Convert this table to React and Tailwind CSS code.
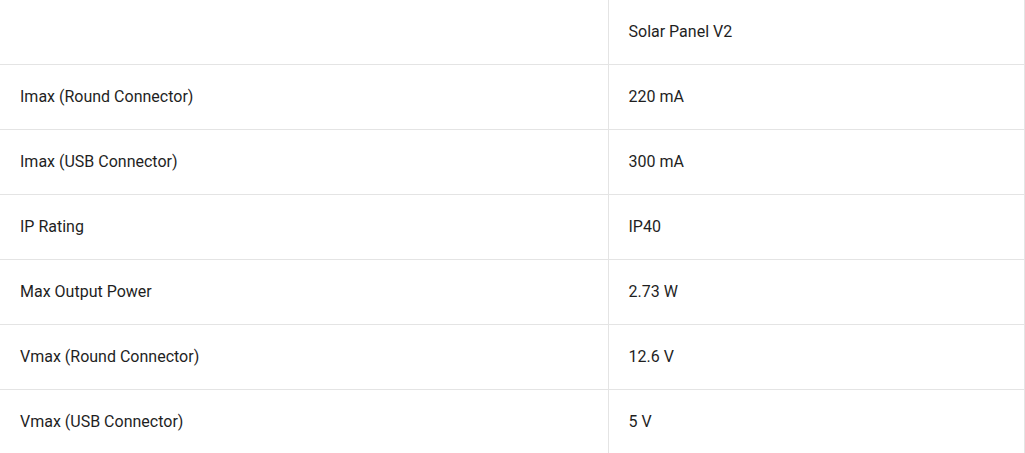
const ROWS = [
  ["Imax (Round Connector)", "220 mA"],
  ["Imax (USB Connector)", "300 mA"],
  ["IP Rating", "IP40"],
  ["Max Output Power", "2.73 W"],
  ["Vmax (Round Connector)", "12.6 V"],
  ["Vmax (USB Connector)", "5 V"],
];

export default function App() {
  return (
    <div className="w-[1025px] h-[453px] overflow-hidden bg-white text-base text-[#1f1f1f] font-['Roboto',sans-serif]">
      <table className="w-[1025px] border-collapse table-fixed">
        <colgroup>
          <col className="w-[608px]" />
          <col />
        </colgroup>
        <tbody>
          <tr className="h-[64px] border-b border-[#e4e4e4]">
            <td className="px-5" />
            <td className="px-5 border-l border-r border-[#e4e4e4]">Solar Panel V2</td>
          </tr>
          {ROWS.map(([label, value]) => (
            <tr key={label} className="h-[65px] border-b border-[#e4e4e4]">
              <td className="px-5">{label}</td>
              <td className="px-5 border-l border-r border-[#e4e4e4]">{value}</td>
            </tr>
          ))}
        </tbody>
      </table>
    </div>
  );
}
